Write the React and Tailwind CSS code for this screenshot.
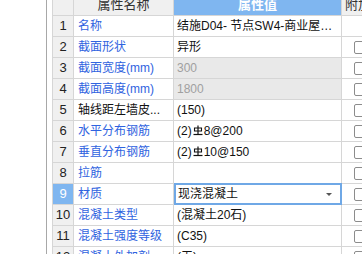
import React from 'react';

const rows = [
  { n: 1, name: '名称', value: '结施D04- 节点SW4-商业屋面板墙', check: false },
  { n: 2, name: '截面形状', value: '异形' },
  { n: 3, name: '截面宽度(mm)', value: '300', disabled: true },
  { n: 4, name: '截面高度(mm)', value: '1800', disabled: true },
  { n: 5, name: '轴线距左墙皮...', value: '(150)', black: true },
  { n: 6, name: '水平分布钢筋', value: '8@200', bar: true },
  { n: 7, name: '垂直分布钢筋', value: '10@150', bar: true },
  { n: 8, name: '拉筋', value: '' },
  { n: 9, name: '材质', value: '现浇混凝土', selected: true },
  { n: 10, name: '混凝土类型', value: '(混凝土20石)' },
  { n: 11, name: '混凝土强度等级', value: '(C35)' },
  { n: 12, name: '混凝土外加剂', value: '(无)' },
];

const font = { fontFamily: '"Liberation Sans", "Noto Sans CJK SC", sans-serif' };

const BarIcon = () => (
  <svg width="10" height="11" viewBox="0 0 10 11" className="mx-[1px] mb-[2px] inline-block">
    <path d="M5 0.5 V9" stroke="#111" strokeWidth="1.2" fill="none" />
    <path d="M1.5 3 H8.5 V6 H1.5 Z" stroke="#111" strokeWidth="1.1" fill="none" />
    <path d="M0.5 9.5 H9.5" stroke="#111" strokeWidth="1.2" fill="none" />
  </svg>
);

const Row = ({ r }) => {
  const numCls = r.selected
    ? 'bg-[#7fb6f0] text-white'
    : 'bg-[#f0f0f0] text-[#222]';
  return (
    <div className="flex h-[21px] border-b border-[#d6d6d6]">
      <div className={`w-[21px] shrink-0 border-r border-[#d6d6d6] flex items-center justify-center text-[13px] ${numCls}`}>
        {r.n}
      </div>
      <div className={`w-[100px] shrink-0 border-r border-[#d6d6d6] pl-[4px] pr-[2px] text-[12px] leading-[20px] whitespace-nowrap overflow-hidden ${r.black ? 'text-[#111]' : 'text-[#2f63e0]'}`}>
        {r.name}
      </div>
      {r.selected ? (
        <div className="w-[168px] shrink-0 -mt-[1px] h-[22px] border-2 border-[#6fa8e6] bg-white pl-[2px] pr-[8px] flex items-center justify-between text-[12px] text-[#111]">
          <span>{r.value}</span>
          <span className="w-0 h-0 border-l-[3px] border-r-[3px] border-t-[3px] border-l-transparent border-r-transparent border-t-[#555]" />
        </div>
      ) : r.bar ? (
        <div className="w-[168px] shrink-0 border-r border-[#d6d6d6] pl-[3px] flex items-center text-[12px] text-[#111] bg-white whitespace-nowrap">
          (2)<BarIcon />{r.value}
        </div>
      ) : (
        <div className={`w-[168px] shrink-0 border-r border-[#d6d6d6] pl-[3px] pr-[4px] text-[12px] leading-[20px] truncate ${r.disabled ? 'bg-[#e9e9e9] text-[#a0a0a0]' : 'bg-white text-[#111]'}`}>
          {r.value}
        </div>
      )}
      <div className="flex-1 pl-[12px] flex items-center bg-white">
        {r.check !== false && (
          <div className="w-[13px] h-[13px] border border-[#8c8c8c] rounded-[2px] bg-white" />
        )}
      </div>
    </div>
  );
};

export default function App() {
  return (
    <div className="w-[362px] h-[254px] overflow-hidden bg-white flex" style={font}>
      <div className="w-[46px] shrink-0 bg-white" />
      <div className="w-[1px] shrink-0 bg-[#a8a8a8]" />
      <div className="w-[5px] shrink-0 bg-white" />
      <div className="flex-1 border-l border-[#d6d6d6] -mt-[5px]">
        <div className="flex h-[21px] border-b border-[#d6d6d6]">
          <div className="w-[21px] shrink-0 border-r border-[#d6d6d6] bg-[#f0f0f0]" />
          <div className="w-[100px] shrink-0 border-r border-[#d6d6d6] bg-[#f0f0f0] flex items-center justify-center text-[13px] text-[#333]">
            属性名称
          </div>
          <div className="w-[168px] shrink-0 border-r border-[#d6d6d6] bg-[#7fb6f0] flex items-center justify-center text-[13px] font-bold text-white">
            属性值
          </div>
          <div className="flex-1 bg-[#f0f0f0] pl-[3px] flex items-center text-[13px] text-[#333] whitespace-nowrap overflow-hidden">
            附加
          </div>
        </div>
        {rows.map((r) => (
          <Row key={r.n} r={r} />
        ))}
      </div>
    </div>
  );
}
